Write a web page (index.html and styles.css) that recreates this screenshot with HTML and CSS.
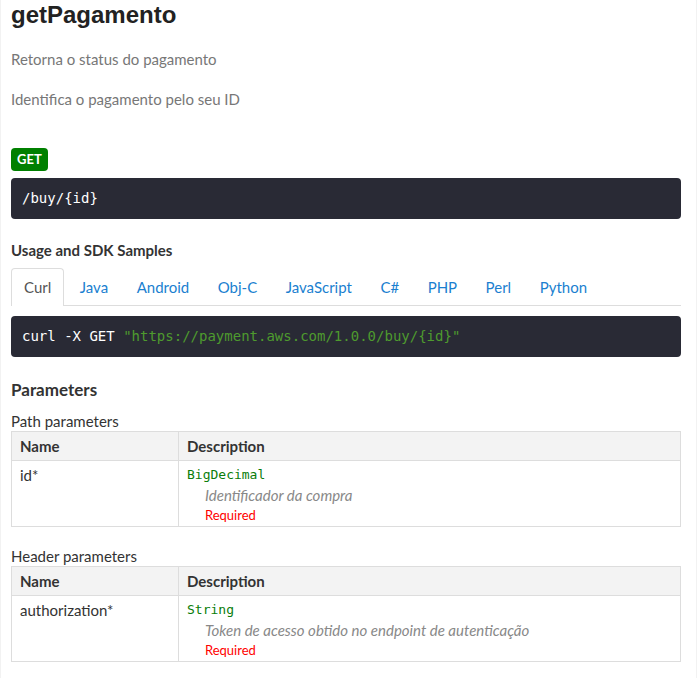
FILE: index.html
```html
<!DOCTYPE html>
<html lang="pt">
<head>
<meta charset="utf-8">
<title>getPagamento</title>
<link rel="stylesheet" href="styles.css">
</head>
<body>
<div class="page">
  <h1 class="title">getPagamento</h1>
  <p class="desc">Retorna o status do pagamento</p>
  <p class="desc">Identifica o pagamento pelo seu ID</p>

  <div class="method"><span class="badge">GET</span></div>
  <pre class="code path">/buy/{id}</pre>

  <h3 class="samples-title">Usage and SDK Samples</h3>
  <ul class="tabs">
    <li class="tab active">Curl</li>
    <li class="tab">Java</li>
    <li class="tab">Android</li>
    <li class="tab">Obj-C</li>
    <li class="tab">JavaScript</li>
    <li class="tab">C#</li>
    <li class="tab">PHP</li>
    <li class="tab">Perl</li>
    <li class="tab">Python</li>
  </ul>
  <pre class="code curl">curl -X GET <span class="str">"https://payment.aws.com/1.0.0/buy/{id}"</span></pre>

  <h3 class="params-title">Parameters</h3>

  <div class="param-group">
    <div class="group-title">Path parameters</div>
    <table class="ptable">
      <thead>
        <tr><th class="col-name">Name</th><th>Description</th></tr>
      </thead>
      <tbody>
        <tr>
          <td class="col-name">id*</td>
          <td>
            <div class="type">BigDecimal</div>
            <div class="pdesc">Identificador da compra</div>
            <div class="required">Required</div>
          </td>
        </tr>
      </tbody>
    </table>
  </div>

  <div class="param-group">
    <div class="group-title">Header parameters</div>
    <table class="ptable">
      <thead>
        <tr><th class="col-name">Name</th><th>Description</th></tr>
      </thead>
      <tbody>
        <tr>
          <td class="col-name">authorization*</td>
          <td>
            <div class="type">String</div>
            <div class="pdesc">Token de acesso obtido no endpoint de autenticação</div>
            <div class="required">Required</div>
          </td>
        </tr>
      </tbody>
    </table>
  </div>
</div>
</body>
</html>
```

FILE: styles.css
```css
html, body {
  margin: 0;
  padding: 0;
  background: #fff;
}
body {
  font-family: Lato, "Open Sans", sans-serif;
  font-size: 15px;
  color: #333;
}
.page {
  border-left: 1px solid #f2f2f2;
  border-right: 1px solid #f2f2f2;
  padding: 0 15px 0 10px;
  min-height: 678px;
  box-sizing: border-box;
}
.title {
  font-family: "Liberation Sans", Arial, sans-serif;
  font-size: 24px;
  font-weight: bold;
  color: #222;
  margin: 0;
  padding-top: 1px;
  line-height: 28px;
}
.desc {
  margin: 0;
  color: #777;
  font-size: 15px;
  line-height: 20px;
  margin-top: 20px;
}
.method {
  margin-top: 39px;
  height: 23px;
  display: flex;
}
.badge {
  display: block;
  background: #008000;
  color: #fff;
  font-weight: bold;
  font-size: 13px;
  height: 23px;
  line-height: 23px;
  padding: 0 6px;
  border-radius: 4px;
}
.code {
  margin: 0;
  background: #292a35;
  color: #fff;
  border-radius: 4px;
  font-family: "DejaVu Sans Mono", monospace;
  font-size: 14px;
  line-height: 41px;
  height: 41px;
  padding: 0 11px;
}
.path {
  margin-top: 7px;
}
.str {
  color: #4e9a2e;
}
.samples-title {
  font-size: 15px;
  font-weight: bold;
  margin: 18px 0 0;
  line-height: 26px;
}
.tabs {
  list-style: none;
  margin: 5px 0 0;
  padding: 0;
  display: flex;
  border-bottom: 1px solid #ddd;
}
.tab {
  color: #1b7fd0;
  padding: 0 12px;
  margin-right: 2.5px;
  line-height: 36px;
  border: 1px solid transparent;
  border-bottom: none;
  border-radius: 4px 4px 0 0;
  margin-bottom: -1px;
}
.tab.active {
  color: #555;
  border-color: #ddd;
  background: #fff;
  padding-bottom: 1px;
}
.curl {
  margin-top: 10px;
}
.params-title {
  font-size: 17px;
  font-weight: bold;
  margin: 20px 0 0;
  line-height: 26px;
}
.group-title {
  line-height: 19px;
  margin-top: 9px;
}
.param-group + .param-group {
  margin-top: 20px;
}
.ptable {
  width: 100%;
  border-collapse: collapse;
  border: 1px solid #ddd;
}
.ptable th, .ptable td {
  border: 1px solid #ddd;
  text-align: left;
  vertical-align: top;
  padding: 4px 8px;
}
.ptable th {
  background: #f3f3f3;
  font-weight: bold;
  line-height: 20px;
}
.ptable td {
  line-height: 20px;
  padding-bottom: 1px;
}
.col-name {
  width: 150px;
}
.type {
  font-family: "DejaVu Sans Mono", monospace;
  font-size: 13px;
  color: #0a7d0a;
}
.pdesc {
  font-style: italic;
  color: #888;
  padding-left: 18px;
}
.required {
  color: #f00;
  font-size: 13px;
  padding-left: 18px;
}
```
